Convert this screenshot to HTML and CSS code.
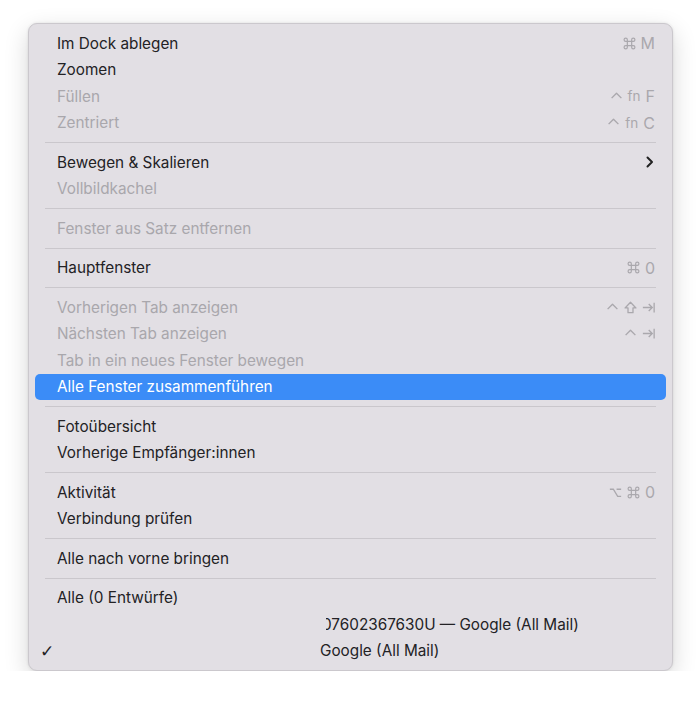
FILE: index.html
```html
<!DOCTYPE html>
<html>
<head>
	<title>Fenster</title>
	<link rel="stylesheet" href="styles.css">
</head>
<body>
	<svg width="0" height="0" class="defs">
		<symbol id="cmd" viewBox="0 0 12 12"><path d="M4 4 V2.5 A1.5 1.5 0 1 0 2.5 4 H9.5 A1.5 1.5 0 1 0 8 2.5 V9.5 A1.5 1.5 0 1 0 9.5 8 H2.5 A1.5 1.5 0 1 0 4 9.5 Z" fill="none" stroke="currentColor" stroke-width="1.1"/></symbol>
		<symbol id="ctrl" viewBox="0 0 12 12"><path d="M1.5 7.5 L6 3 L10.5 7.5" fill="none" stroke="currentColor" stroke-width="1.3" stroke-linejoin="round"/></symbol>
		<symbol id="shift" viewBox="0 0 12 12"><path d="M6 1.2 L11 6.4 H8.3 V10.8 H3.7 V6.4 H1 Z" fill="none" stroke="currentColor" stroke-width="1.2" stroke-linejoin="round"/></symbol>
		<symbol id="tab" viewBox="0 0 12 12"><path d="M0.8 6 H9.5 M6.2 2.7 L9.5 6 L6.2 9.3 M11.2 1.5 V10.5" fill="none" stroke="currentColor" stroke-width="1.2"/></symbol>
		<symbol id="opt" viewBox="0 0 12 12"><path d="M0.8 3 H4 L8 9.5 H11.2 M7 3 H11.2" fill="none" stroke="currentColor" stroke-width="1.2"/></symbol>
	</svg>
	<div class="menu">
		<div class="item"><span class="label">Im Dock ablegen</span><span class="keys"><svg class="key"><use href="#cmd"/></svg><span>M</span></span></div>
		<div class="item"><span class="label">Zoomen</span></div>
		<div class="item disabled"><span class="label">Füllen</span><span class="keys"><svg class="key"><use href="#ctrl"/></svg><small>fn</small><span>F</span></span></div>
		<div class="item disabled"><span class="label">Zentriert</span><span class="keys"><svg class="key"><use href="#ctrl"/></svg><small>fn</small><span>C</span></span></div>
		<div class="sep"></div>
		<div class="item"><span class="label">Bewegen &amp; Skalieren</span>
			<svg class="chevron" width="8" height="12" viewBox="0 0 8 12"><path d="M1.5 1.5 L6 6 L1.5 10.5" fill="none" stroke="#222" stroke-width="2" stroke-linecap="round" stroke-linejoin="round"/></svg>
		</div>
		<div class="item disabled"><span class="label">Vollbildkachel</span></div>
		<div class="sep"></div>
		<div class="item disabled"><span class="label">Fenster aus Satz entfernen</span></div>
		<div class="sep"></div>
		<div class="item"><span class="label">Hauptfenster</span><span class="keys"><svg class="key"><use href="#cmd"/></svg><span>0</span></span></div>
		<div class="sep"></div>
		<div class="item disabled"><span class="label">Vorherigen Tab anzeigen</span><span class="keys"><svg class="key"><use href="#ctrl"/></svg><svg class="key"><use href="#shift"/></svg><svg class="key"><use href="#tab"/></svg></span></div>
		<div class="item disabled"><span class="label">Nächsten Tab anzeigen</span><span class="keys"><svg class="key"><use href="#ctrl"/></svg><svg class="key"><use href="#tab"/></svg></span></div>
		<div class="item disabled"><span class="label">Tab in ein neues Fenster bewegen</span></div>
		<div class="item active"><span class="label">Alle Fenster zusammenführen</span></div>
		<div class="sep"></div>
		<div class="item"><span class="label">Fotoübersicht</span></div>
		<div class="item"><span class="label">Vorherige Empfänger:innen</span></div>
		<div class="sep"></div>
		<div class="item"><span class="label">Aktivität</span><span class="keys"><svg class="key"><use href="#opt"/></svg><svg class="key"><use href="#cmd"/></svg><span>0</span></span></div>
		<div class="item"><span class="label">Verbindung prüfen</span></div>
		<div class="sep"></div>
		<div class="item"><span class="label">Alle nach vorne bringen</span></div>
		<div class="sep"></div>
		<div class="item"><span class="label">Alle (0 Entwürfe)</span></div>
		<div class="item"><span class="label redacted first"><span>07602367630U — Google (All Mail)</span></span></div>
		<div class="item"><span class="check">✓</span><span class="label redacted second"><span>Google (All Mail)</span></span></div>
	</div>
</body>
</html>
```

FILE: styles.css
```css
body {
	margin: 0;
	background: #fff;
	font-family: Inter, "Liberation Sans", sans-serif;
}

.defs {
	position: absolute;
}

.menu {
	box-sizing: border-box;
	width: 645px;
	margin: 23px 0 0 28px;
	padding: 6px 6px;
	background: #e2dfe4;
	border: 1px solid #cbc8cd;
	border-radius: 9px;
	box-shadow: 0 8px 24px rgba(0, 0, 0, 0.16), 0 0 3px rgba(0, 0, 0, 0.1);
}

.item {
	position: relative;
	display: flex;
	align-items: center;
	height: 26.5px;
	padding: 0 11px 0 22px;
	border-radius: 5px;
	font-size: 15.3px;
	color: #232225;
}

.item .label {
	flex: 1;
}

.item.disabled {
	color: #a9a7ac;
}

.item.active {
	background: #3b8cf7;
	color: #fff;
}

.keys {
	display: flex;
	align-items: center;
	gap: 5px;
	font-size: 16px;
	color: #aaa8ad;
}

.keys .key {
	width: 13px;
	height: 13px;
}

.keys small {
	font-size: 13.5px;
}

.chevron {
	margin-right: 1px;
}

.sep {
	height: 1px;
	margin: 6px 10px;
	background: #cac7cc;
}

.check {
	position: absolute;
	left: 5px;
	font-size: 17px;
	font-family: "DejaVu Sans", sans-serif;
}

.redacted {
	overflow: hidden;
	white-space: nowrap;
}

.redacted.first {
	margin-left: 269px;
}

.redacted.first span {
	margin-left: -4px;
}

.redacted.second {
	margin-left: 263px;
}
```
